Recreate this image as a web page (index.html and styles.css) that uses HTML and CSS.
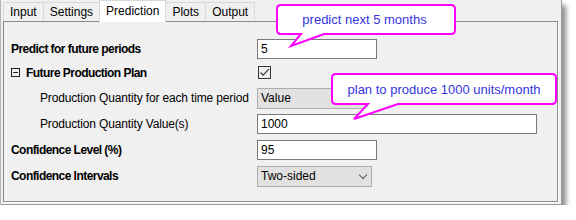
FILE: index.html
```html
<!DOCTYPE html>
<html lang="en">
<head>
    <meta charset="UTF-8">
    <title>Prediction</title>
    <link rel="stylesheet" href="styles.css">
</head>
<body>

<div class="dialog">
    <div class="tabs">
        <div class="tab">Input</div>
        <div class="tab">Settings</div>
        <div class="tab active">Prediction</div>
        <div class="tab">Plots</div>
        <div class="tab">Output</div>
    </div>

    <div class="panel">
        <div class="row row-1">
            <div class="label bold">Predict for future periods</div>
            <div class="field short">5</div>
        </div>
        <div class="row row-2">
            <div class="label bold"><span class="collapse"></span>Future Production Plan</div>
            <div class="check">
                <svg width="11" height="11" viewBox="0 0 11 11"><path d="M1.5 5.5 L4.2 8.2 L9.8 2.2" fill="none" stroke="#333" stroke-width="1.2"/></svg>
            </div>
        </div>
        <div class="row row-3">
            <div class="label sub">Production Quantity for each time period</div>
            <div class="combo">Value<span class="chev"></span></div>
        </div>
        <div class="row row-4">
            <div class="label sub">Production Quantity Value(s)</div>
            <div class="field long">1000</div>
        </div>
        <div class="row row-5">
            <div class="label bold">Confidence Level (%)</div>
            <div class="field short">95</div>
        </div>
        <div class="row row-6">
            <div class="label bold">Confidence Intervals</div>
            <div class="combo">Two-sided<span class="chev"></span></div>
        </div>
    </div>

    <!-- annotation balloons -->
    <div class="callout callout-1">
        <svg width="181" height="44" viewBox="0 0 181 44"><path d="M5,1 H175 Q179,1 179,5 V26 Q179,30 175,30 H48 L15,42 L25,30 H5 Q1,30 1,26 V5 Q1,1 5,1 Z" fill="#fff" stroke="#ff00ff" stroke-width="2"/></svg>
        <span class="note">predict next 5 months</span>
    </div>
    <div class="callout callout-2">
        <svg width="227" height="48" viewBox="0 0 227 48"><path d="M5,1 H221 Q225,1 225,5 V27 Q225,31 221,31 H67 L23,46 L37,31 H5 Q1,31 1,27 V5 Q1,1 5,1 Z" fill="#fff" stroke="#ff00ff" stroke-width="2"/></svg>
        <span class="note">plan to produce 1000 units/month</span>
    </div>
</div>

</body>
</html>
```

FILE: styles.css
```css
body {
    margin: 0;
    background: #fff;
    font-family: "Liberation Sans", Arial, sans-serif;
    font-size: 12px;
    color: #000;
}
.dialog {
    position: relative;
    width: 558px;
    height: 204px;
    padding-left: 2px;
    background: #f0f0f0;
    border-left: 1px solid #b4b4b4;
    border-right: 1px solid #9c9c9c;
    border-bottom: 1px solid #9c9c9c;
    box-shadow: 4px 5px 5px rgba(0, 0, 0, 0.45);
}
.tabs {
    display: flex;
    height: 21px;
    align-items: flex-end;
}
.tab {
    height: 19px;
    line-height: 18px;
    padding: 0 6px;
    box-sizing: border-box;
    border: 1px solid #d9d9d9;
    border-bottom: none;
    margin-right: -1px;
}
.tab.active {
    height: 22px;
    line-height: 21px;
    background: #fff;
    position: relative;
    z-index: 1;
    margin-bottom: -1px;
}
.panel {
    width: 555px;
    height: 181px;
    box-sizing: border-box;
    border: 1px solid #8a8a8a;
    box-shadow: 1px 1px 0 #fff;
    padding: 15px 0 0 7px;
}
.row {
    display: flex;
    align-items: center;
}
.row-1 { height: 23px; }
.row-2 { height: 25px; }
.row-3 { height: 26px; }
.row-4 { height: 25px; }
.row-5 { height: 27px; }
.row-6 { height: 26px; }
.label {
    width: 246px;
    flex-shrink: 0;
    display: flex;
    align-items: center;
    white-space: nowrap;
}
.bold {
    font-weight: bold;
    letter-spacing: -0.55px;
}
.sub {
    padding-left: 29px;
    box-sizing: border-box;
    letter-spacing: -0.15px;
}
.collapse {
    position: relative;
    width: 9px;
    height: 9px;
    border: 1px solid #222;
    margin-right: 6px;
    box-sizing: border-box;
}
.collapse::after {
    content: "";
    position: absolute;
    left: 1px;
    right: 1px;
    top: 3px;
    height: 1px;
    background: #222;
}
.field {
    height: 20px;
    line-height: 18px;
    box-sizing: border-box;
    border: 1px solid #7a7a7a;
    background: #fff;
    padding-left: 3px;
}
.short { width: 120px; }
.long { width: 280px; }
.check {
    width: 13px;
    height: 13px;
    box-sizing: border-box;
    border: 1px solid #333;
    margin-left: 1px;
    display: flex;
    align-items: center;
    justify-content: center;
}
.combo {
    position: relative;
    width: 115px;
    height: 21px;
    line-height: 19px;
    box-sizing: border-box;
    border: 1px solid #adadad;
    background: #e1e1e1;
    padding-left: 3px;
}
.chev {
    position: absolute;
    right: 5px;
    top: 5px;
    width: 5px;
    height: 5px;
    border-right: 1px solid #555;
    border-bottom: 1px solid #555;
    transform: rotate(45deg);
}
.callout {
    position: absolute;
    z-index: 2;
}
.callout svg {
    display: block;
}
.callout-1 {
    left: 275px;
    top: 4px;
}
.callout-2 {
    left: 330px;
    top: 73px;
}
.note {
    position: absolute;
    left: 0;
    font-family: "Liberation Sans", Arial, sans-serif;
    font-size: 13px;
    color: #3535e0;
    text-align: center;
}
.callout-1 .note {
    top: 8px;
    width: 177px;
}
.callout-2 .note {
    top: 9px;
    width: 226px;
}
```
